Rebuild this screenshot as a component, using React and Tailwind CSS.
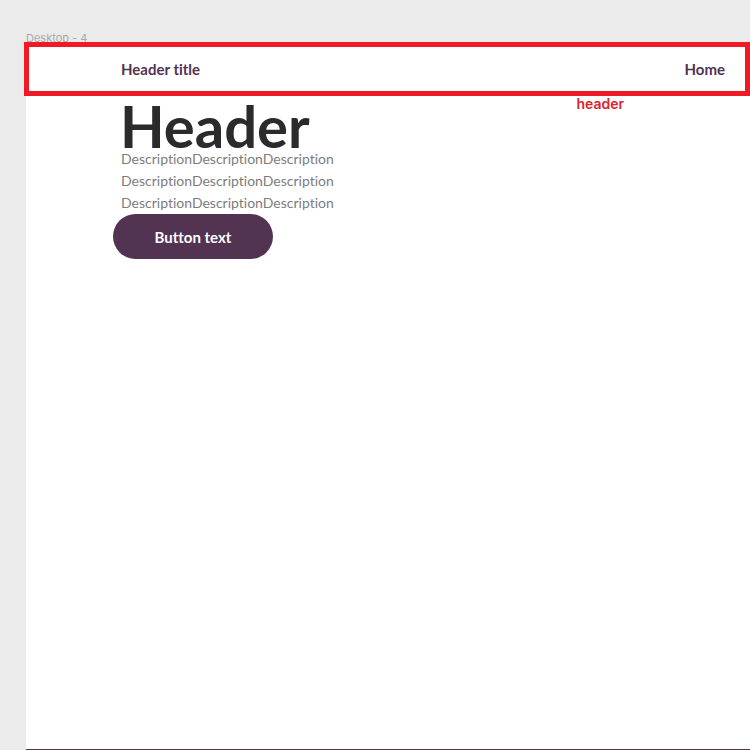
import React from 'react';

const description = [
  'DescriptionDescriptionDescription',
  'DescriptionDescriptionDescription',
  'DescriptionDescriptionDescription',
];

const Header = () => (
  <header className="flex h-[54px] items-center justify-between border-[5px] border-[#f01a27] bg-white pl-[92px] pr-5 font-['Lato',sans-serif] text-[15px] font-bold text-[#523351] [font-variant-ligatures:none]">
    <div>Header title</div>
    <a href="#home">Home</a>
  </header>
);

const Hero = () => (
  <section className="flex flex-col items-start pl-[94px] pt-2 font-['Lato',sans-serif] [font-variant-ligatures:none]">
    <h1 className="text-[58px] font-bold leading-[44px] text-[#2b2b2b]">Header</h1>
    <div className="pl-px text-sm leading-[22px] text-[#7d7d7d]">
      {description.map((line, i) => (
        <p key={i}>{line}</p>
      ))}
    </div>
    <button
      type="button"
      className="-ml-[7px] h-[45px] min-w-40 rounded-full bg-[#523351] px-10 text-[15px] font-bold leading-[22px] text-white"
    >
      Button text
    </button>
  </section>
);

const App = () => {
  return (
    <div className="flex min-h-screen flex-col bg-[#ebebeb] pl-6">
      {/* Frame name */}
      <div className="h-[42px] pl-0.5 pt-8 font-['Inter',sans-serif] text-[11px] leading-3 text-[#a9a9a9]">
        Desktop - 4
      </div>

      <Header />

      <main className="relative ml-0.5 grow border-b border-[#523351] bg-white">
        {/* Annotation under the header outline */}
        <span className="absolute right-[126px] top-0 font-['Inter',sans-serif] text-sm font-semibold leading-4 text-[#e0212f]">
          header
        </span>
        <Hero />
      </main>
    </div>
  );
};

export default App;
